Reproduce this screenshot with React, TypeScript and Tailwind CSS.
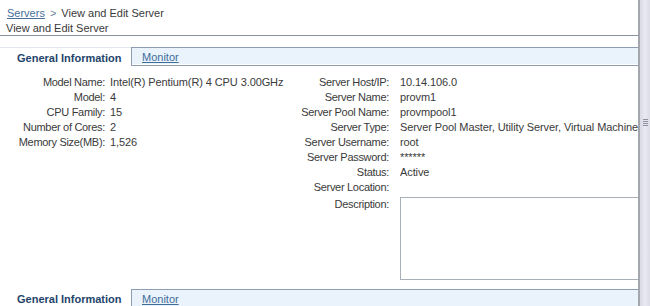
import React from "react";

const left = [
  ["Model Name:", "Intel(R) Pentium(R) 4 CPU 3.00GHz"],
  ["Model:", "4"],
  ["CPU Family:", "15"],
  ["Number of Cores:", "2"],
  ["Memory Size(MB):", "1,526"],
];

const right = [
  ["Server Host/IP:", "10.14.106.0"],
  ["Server Name:", "provm1"],
  ["Server Pool Name:", "provmpool1"],
  ["Server Type:", "Server Pool Master, Utility Server, Virtual Machine Server"],
  ["Server Username:", "root"],
  ["Server Password:", "******"],
  ["Status:", "Active"],
  ["Server Location:", ""],
];

function Tabs({ topLine }: { topLine?: boolean }) {
  return (
    <div className="flex h-[19px] text-[11px] leading-[14px]">
      <div
        className={`w-[131px] pl-[17px] pt-[3px] font-bold text-[#24446a] ${
          topLine ? "border-t border-[#e2e7ee]" : ""
        }`}
      >
        General Information
      </div>
      <div className="flex-1 border-t border-l border-b border-[#8e9db3] bg-[#eaf3fc] pl-[10px] pt-[2px] shadow-[inset_0_-1px_0_#ffffff]">
        <a href="#" className="text-[#3f6d99] underline">
          Monitor
        </a>
      </div>
    </div>
  );
}

export default function App() {
  return (
    <div className="flex h-[306px] w-[650px] overflow-hidden bg-white font-['Liberation_Sans',Arial,sans-serif] text-[11px] text-[#3a3a3a]">
      <div className="flex w-[638px] shrink-0 flex-col overflow-hidden">
        {/* breadcrumb */}
        <div className="h-[20px] pl-[7px] pt-[6px] leading-[14px]">
          <a href="#" className="text-[#47709a] underline">
            Servers
          </a>
          <span className="px-[5px] text-[#6a7f96]">&gt;</span>
          View and Edit Server
        </div>
        <div className="h-[16px] border-b border-[#8a93a0] pl-[6px] pt-[1px] leading-[14px]">
          View and Edit Server
        </div>

        <div className="mt-[11px]">
          <Tabs topLine />
        </div>

        {/* body */}
        <div className="mt-[9px] flex">
          <div className="grid w-[300px] shrink-0 grid-cols-[105px_minmax(0,1fr)] content-start gap-x-[5px] leading-[15px]">
            {left.map(([k, v]) => (
              <React.Fragment key={k}>
                <div className="whitespace-nowrap text-right tracking-[-0.3px]">{k}</div>
                <div className="whitespace-nowrap tracking-[-0.1px]">{v}</div>
              </React.Fragment>
            ))}
          </div>
          <div className="grid min-w-0 flex-1 grid-cols-[89px_minmax(0,1fr)] gap-x-[11px] leading-[15px]">
            {right.map(([k, v]) => (
              <React.Fragment key={k}>
                <div className="whitespace-nowrap text-right tracking-[-0.3px]">{k}</div>
                <div className="overflow-hidden whitespace-nowrap tracking-[-0.1px]">{v}</div>
              </React.Fragment>
            ))}
            <div className="mt-[2px] whitespace-nowrap text-right tracking-[-0.3px]">Description:</div>
            <div className="mt-[2px] h-[83px] w-[260px] border border-[#a9afb7] bg-white" />
          </div>
        </div>

        <div className="mt-[9px]">
          <Tabs />
        </div>
      </div>

      {/* scrollbar */}
      <div className="relative h-full w-[12px] border-l-2 border-[#a4a6ae] bg-gradient-to-r from-[#d9d9e6] via-[#e9e9f3] to-[#dcdce8]">
        <div className="absolute left-[3px] top-[119px] flex w-[5px] flex-col gap-[1px]">
          <div className="h-px bg-[#8e90a0]" />
          <div className="h-px bg-[#8e90a0]" />
          <div className="h-px bg-[#8e90a0]" />
          <div className="h-px bg-[#8e90a0]" />
        </div>
      </div>
    </div>
  );
}
